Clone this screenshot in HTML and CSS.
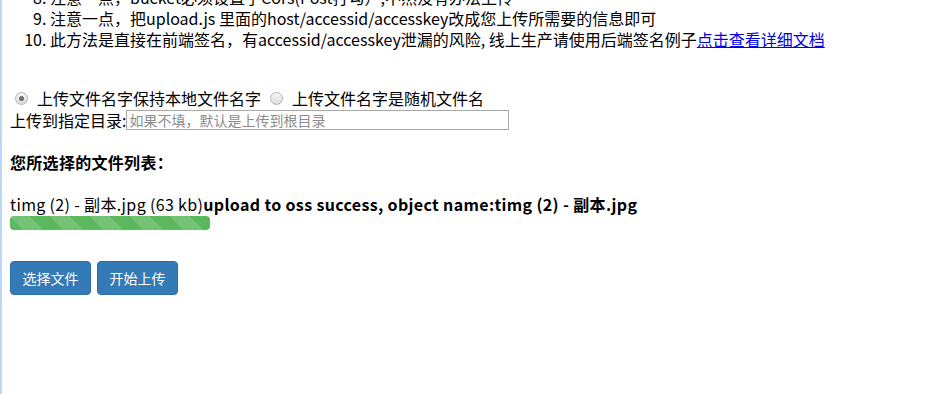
FILE: index.html
```html
<!DOCTYPE html>
<html lang="zh-CN">

<head>
    <meta charset="UTF-8">
    <meta name="viewport" content="width=device-width, initial-scale=1.0">
    <title>OSS web直传</title>
    <link rel="stylesheet" href="styles.css">
</head>

<body>
    <div class="page">
        <ol class="notes" start="8">
            <li>注意一点，bucket必须设置了Cors(Post打勾）,不然没有办法上传</li>
            <li>注意一点，把upload.js 里面的host/accessid/accesskey改成您上传所需要的信息即可</li>
            <li>此方法是直接在前端签名，有accessid/accesskey泄漏的风险, 线上生产请使用后端签名例子<a href="#">点击查看详细文档</a></li>
        </ol>

        <form class="options">
            <div class="radio-row">
                <label><input type="radio" name="myradio" value="local_name" checked> 上传文件名字保持本地文件名字</label>
                <label><input type="radio" name="myradio" value="random_name"> 上传文件名字是随机文件名</label>
            </div>
            <div class="dir-row">
                上传到指定目录:<input type="text" id="dirname" placeholder="如果不填，默认是上传到根目录">
            </div>
        </form>

        <h4 class="list-title">您所选择的文件列表：</h4>
        <div id="ossfile">
            <div class="file-item">
                timg (2) - 副本.jpg (63 kb)<b>upload to oss success, object name:timg (2) - 副本.jpg</b>
                <div class="progress">
                    <div class="progress-bar" style="width: 100%;"></div>
                </div>
            </div>
        </div>

        <div class="container">
            <button type="button" class="btn">选择文件</button>
            <button type="button" class="btn">开始上传</button>
        </div>
    </div>
</body>

</html>
```

FILE: styles.css
```css
:root {
    --text: #000;
    --primary: #337ab7;
    --success: #5cb85c;
    --edge: #b9d7f6;
}

* {
    box-sizing: border-box;
}

html,
body {
    margin: 0;
    padding: 0;
    height: 100%;
    overflow: hidden;
}

body {
    font-family: "Noto Sans CJK SC", "Open Sans", sans-serif;
    font-size: 16px;
    color: var(--text);
    background: #fff;
    border-left: 2px solid var(--edge);
}

.page {
    padding-left: 8px;
}

.notes {
    margin: -13px 0 0;
    padding-left: 40px;
    line-height: 21px;
}

.notes a {
    color: #0000ee;
}

.options {
    margin-top: 37px;
}

.radio-row {
    line-height: 22px;
    display: flex;
    align-items: center;
}

.radio-row label {
    display: flex;
    align-items: center;
    margin-right: 4px;
}

.radio-row input {
    appearance: none;
    width: 13px;
    height: 13px;
    margin: 0 9px 0 5px;
    border: 1px solid #b4b4b4;
    border-radius: 50%;
    background: linear-gradient(#f6f6f6, #dcdcdc);
    position: relative;
}

.radio-row input:checked::after {
    content: "";
    position: absolute;
    left: 3px;
    top: 3px;
    width: 5px;
    height: 5px;
    border-radius: 50%;
    background: #6e6e6e;
}

.dir-row {
    display: flex;
    align-items: center;
    line-height: 22px;
}

.dir-row input {
    width: 383px;
    height: 20px;
    border: 1px solid #a9a9a9;
    padding: 0 2px;
    font-family: inherit;
    font-size: 14px;
}

.dir-row input::placeholder {
    color: #8c8c8c;
}

.list-title {
    margin: 20px 0 0;
    font-size: 16px;
    line-height: 22px;
    letter-spacing: 0.3px;
}

#ossfile {
    margin-top: 20px;
}

.file-item {
    line-height: 22px;
    letter-spacing: 0.35px;
}

.progress {
    width: 200px;
    height: 14px;
    margin-top: 1px;
    border-radius: 4px;
    overflow: hidden;
    background: #f5f5f5;
}

.progress-bar {
    height: 100%;
    background-color: var(--success);
    background-image: linear-gradient(45deg,
            rgba(255, 255, 255, .15) 25%, transparent 25%,
            transparent 50%, rgba(255, 255, 255, .15) 50%,
            rgba(255, 255, 255, .15) 75%, transparent 75%,
            transparent);
    background-size: 40px 40px;
}

.container {
    margin-top: 31px;
    display: flex;
    gap: 6px;
}

.btn {
    width: 81px;
    padding: 6px 0;
    font-family: inherit;
    font-size: 14px;
    line-height: 20px;
    color: #fff;
    background: var(--primary);
    border: 1px solid #2e6da4;
    border-radius: 4px;
    cursor: pointer;
}
```
